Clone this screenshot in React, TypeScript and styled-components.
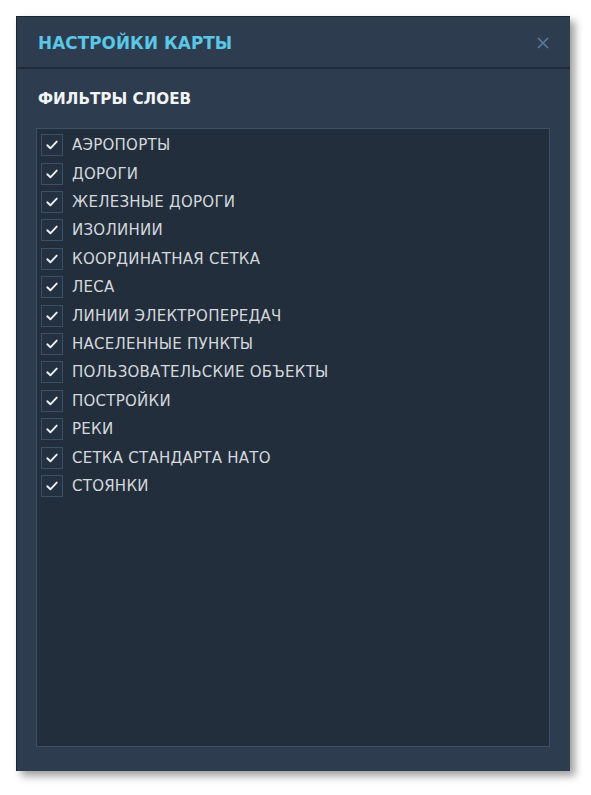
import React from "react";
import styled, { createGlobalStyle } from "styled-components";

const Global = createGlobalStyle`
  html, body { margin: 0; padding: 0; background: #ffffff; }
  body { font-family: "DejaVu Sans", "Liberation Sans", sans-serif; }
`;

const Page = styled.div`
  padding: 16px 0 24px 16px;
`;

const Panel = styled.section`
  width: 554px;
  height: 755px;
  box-sizing: border-box;
  background: #2d3d4f;
  border-top: 1px solid #1c2631;
  border-left: 1px solid #1c2631;
  box-shadow: 5px 5px 8px rgba(0, 0, 0, 0.38);
  display: flex;
  flex-direction: column;
`;

const Header = styled.header`
  height: 52px;
  flex: none;
  box-sizing: border-box;
  border-bottom: 2px solid #1f2b38;
  display: flex;
  align-items: center;
  justify-content: space-between;
  padding: 1px 21px 0 21px;
`;

const Title = styled.h1`
  margin: 0;
  font-size: 16.8px;
  font-weight: bold;
  color: #5cc6e6;
  letter-spacing: 0.1px;
`;

const Close = styled.button`
  border: 0;
  background: none;
  padding: 0;
  width: 12px;
  height: 12px;
  display: flex;
  align-items: center;
  justify-content: center;
  color: #5b7b9c;
  cursor: pointer;
`;

const Body = styled.div`
  flex: 1;
  display: flex;
  flex-direction: column;
  padding: 0 20px 24px 19px;
  min-height: 0;
`;

const Section = styled.h2`
  margin: 22px 0 0 2px;
  height: 16px;
  line-height: 16px;
  font-size: 15.2px;
  font-weight: bold;
  color: #f2f4f6;
`;

const List = styled.ul`
  list-style: none;
  margin: 21px 0 0 0;
  padding: 2px 4px;
  flex: 1;
  background: #232e3c;
  border: 1px solid #3a5068;
`;

const Row = styled.li`
  height: 28.42px;
  display: flex;
  align-items: center;
  gap: 9px;
`;

const Box = styled.span`
  width: 20px;
  height: 20px;
  flex: none;
  border: 1px solid #3a5068;
  background: #243140;
  display: flex;
  align-items: center;
  justify-content: center;
  color: #eef1f3;
`;

const Label = styled.span`
  font-size: 15px;
  color: #d4d8dc;
  white-space: nowrap;
  letter-spacing: 0.25px;
`;

const layers = [
  "АЭРОПОРТЫ",
  "ДОРОГИ",
  "ЖЕЛЕЗНЫЕ ДОРОГИ",
  "ИЗОЛИНИИ",
  "КООРДИНАТНАЯ СЕТКА",
  "ЛЕСА",
  "ЛИНИИ ЭЛЕКТРОПЕРЕДАЧ",
  "НАСЕЛЕННЫЕ ПУНКТЫ",
  "ПОЛЬЗОВАТЕЛЬСКИЕ ОБЪЕКТЫ",
  "ПОСТРОЙКИ",
  "РЕКИ",
  "СЕТКА СТАНДАРТА НАТО",
  "СТОЯНКИ",
];

const Check = () => (
  <svg width="12" height="10" viewBox="0 0 12 10" fill="none">
    <path d="M1.3 5.3 L4.4 8.3 L10.7 1.6" stroke="currentColor" strokeWidth="1.9" strokeLinecap="round" strokeLinejoin="round" />
  </svg>
);

const Cross = () => (
  <svg width="12" height="12" viewBox="0 0 12 12" fill="none">
    <path d="M1 1 L11 11 M11 1 L1 11" stroke="currentColor" strokeWidth="1.6" />
  </svg>
);

export default function App() {
  return (
    <Page>
      <Global />
      <Panel>
        <Header>
          <Title>НАСТРОЙКИ КАРТЫ</Title>
          <Close aria-label="close">
            <Cross />
          </Close>
        </Header>
        <Body>
          <Section>ФИЛЬТРЫ СЛОЕВ</Section>
          <List>
            {layers.map((l) => (
              <Row key={l}>
                <Box>
                  <Check />
                </Box>
                <Label>{l}</Label>
              </Row>
            ))}
          </List>
        </Body>
      </Panel>
    </Page>
  );
}
